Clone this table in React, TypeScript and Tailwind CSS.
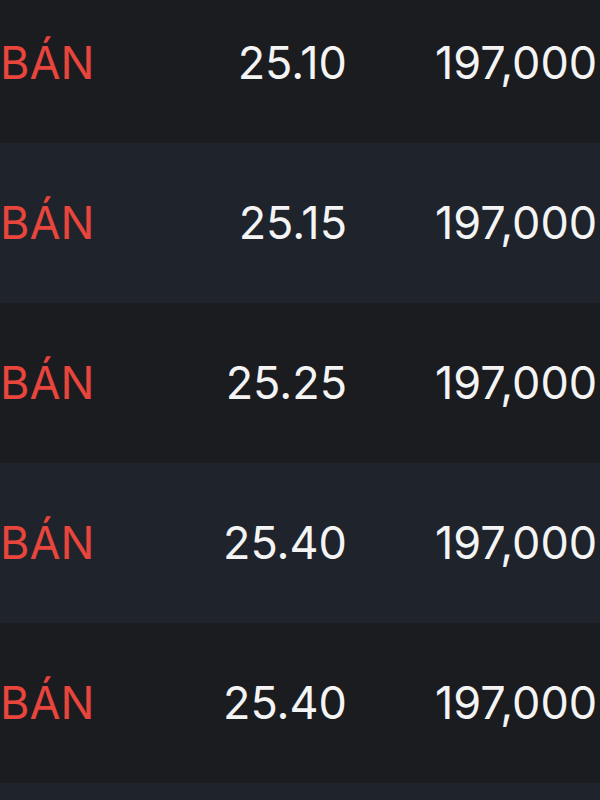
const rows = [
  { side: "BÁN", price: "25.10", qty: "197,000" },
  { side: "BÁN", price: "25.15", qty: "197,000" },
  { side: "BÁN", price: "25.25", qty: "197,000" },
  { side: "BÁN", price: "25.40", qty: "197,000" },
  { side: "BÁN", price: "25.40", qty: "197,000" },
];

export default function App() {
  return (
    <div className="w-[600px] h-[800px] overflow-hidden bg-[#1b1c20] font-['Inter','Liberation_Sans',sans-serif]">
      <div className="-mt-[17px]">
        {rows.map((r, i) => (
          <div
            key={i}
            className={`flex items-center h-[160px] text-[45px] whitespace-nowrap ${
              i % 2 === 1 ? "bg-[#1f232b]" : "bg-[#1b1c20]"
            }`}
          >
            <div className="w-[347px] flex justify-between">
              <span className="text-[#e8453c]">{r.side}</span>
              <span className="text-[#f4f4f5]">{r.price}</span>
            </div>
            <span className="pl-[88px] text-[#f4f4f5]">{r.qty}</span>
          </div>
        ))}
        {/* next row only peeks in at the bottom */}
        <div className="h-[160px] bg-[#1f232b]" />
      </div>
    </div>
  );
}
